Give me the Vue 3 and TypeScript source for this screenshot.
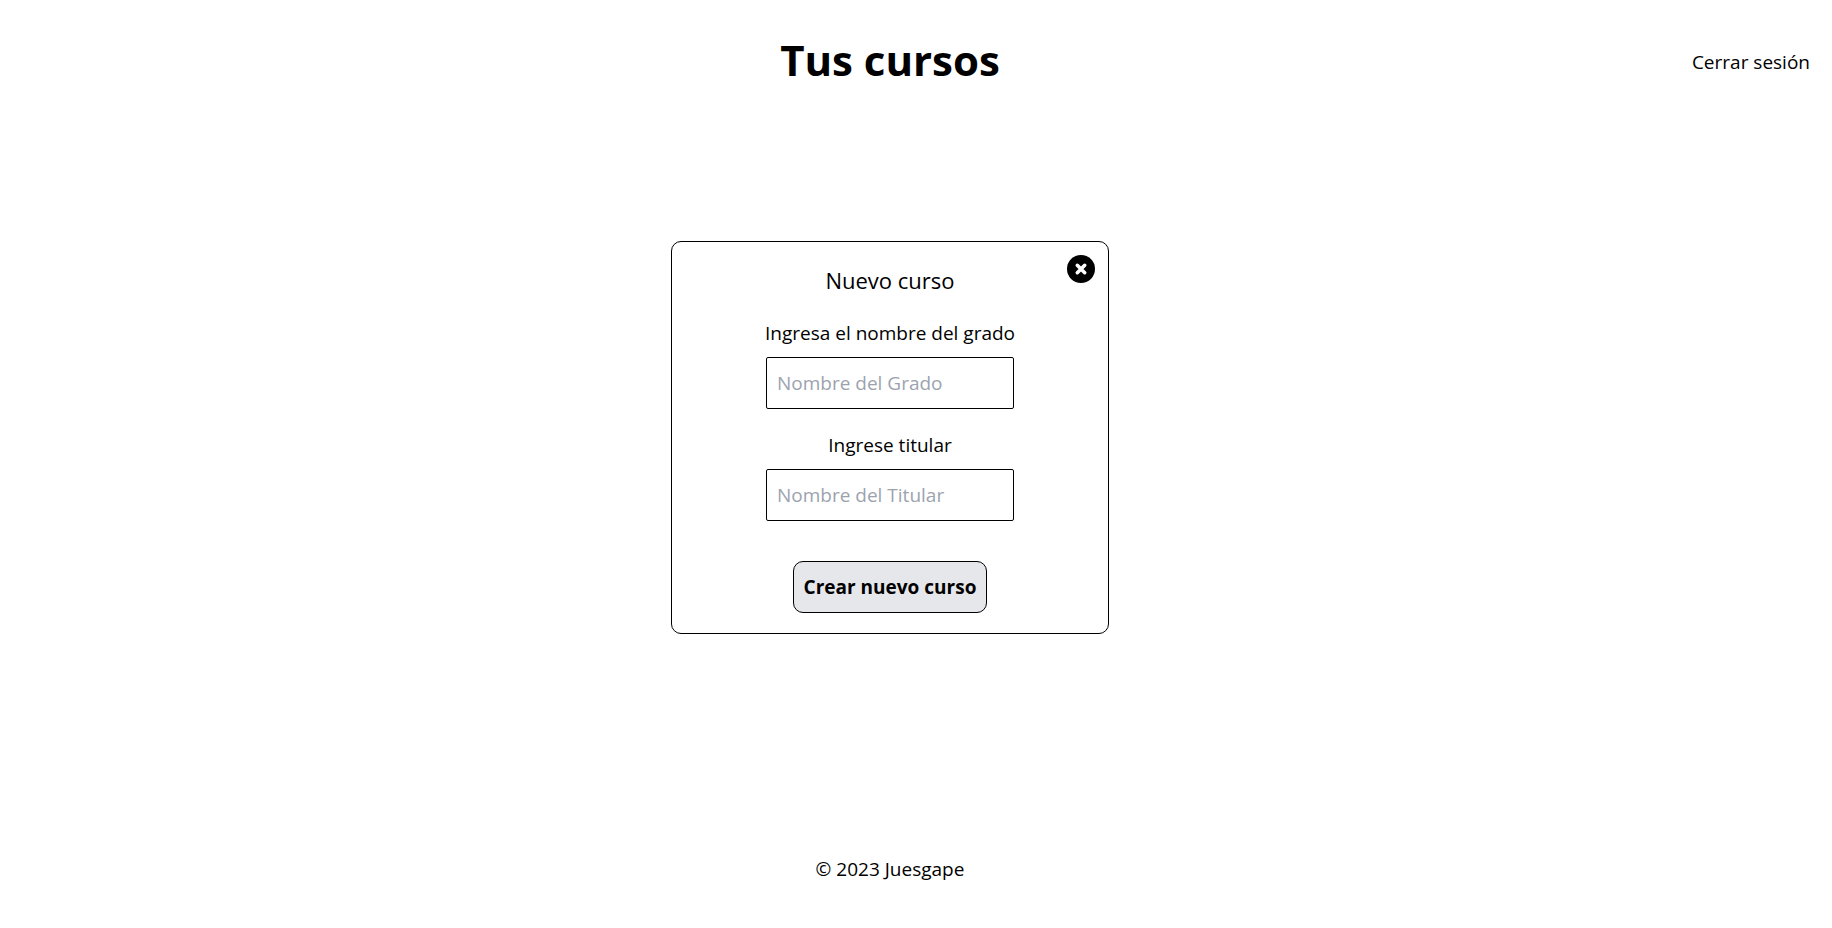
<script setup lang="ts">
import { ref } from 'vue'

const open = ref<boolean>(true)
const grade = ref<string>('')
const teacher = ref<string>('')
</script>

<template>
  <div class="page">
    <header class="header">
      <h1 class="title">Tus cursos</h1>
      <a class="logout" href="#">Cerrar sesión</a>
    </header>

    <main class="main">
      <form v-if="open" class="card" @submit.prevent>
        <button class="close" type="button" aria-label="Cerrar" @click="open = false">
          <svg viewBox="0 0 28 28" width="28" height="28" aria-hidden="true">
            <circle cx="14" cy="14" r="14" />
            <path d="M10.3 10.3 L17.7 17.7 M17.7 10.3 L10.3 17.7" />
          </svg>
        </button>
        <h2 class="heading">Nuevo curso</h2>
        <label class="label" for="grade">Ingresa el nombre del grado</label>
        <input id="grade" v-model="grade" class="field" type="text" placeholder="Nombre del Grado" />
        <label class="label" for="teacher">Ingrese titular</label>
        <input id="teacher" v-model="teacher" class="field" type="text" placeholder="Nombre del Titular" />
        <button class="submit" type="submit">Crear nuevo curso</button>
      </form>
    </main>

    <footer class="footer">© 2023 Juesgape</footer>
  </div>
</template>

<style>
body {
  margin: 0;
  background: #fff;
}
</style>

<style scoped>
.page {
  box-sizing: border-box;
  min-height: 100vh;
  padding-right: 22px;
  display: flex;
  flex-direction: column;
  font-family: "Segoe UI", "Open Sans", "Noto Sans", sans-serif;
  font-size: 19px;
  line-height: 30px;
  color: #000;
}

.header {
  display: grid;
  grid-template-columns: 1fr auto 1fr 30px;
  align-items: center;
  height: 120px;
}

.title {
  grid-column: 2;
  margin: 0;
  font-size: 42px;
  line-height: 50px;
  font-weight: 700;
}

.logout {
  grid-column: 3 / 5;
  justify-self: end;
  padding-top: 4px;
  color: inherit;
  text-decoration: none;
}

.main {
  flex: 1;
  display: flex;
  justify-content: center;
  align-items: flex-start;
  padding: 121px 30px 0 0;
}

.card {
  position: relative;
  box-sizing: border-box;
  width: 438px;
  padding: 20px;
  display: flex;
  flex-direction: column;
  align-items: center;
  border: 1px solid #000;
  border-radius: 10px;
}

.close {
  position: absolute;
  top: 13px;
  right: 13px;
  width: 28px;
  height: 28px;
  padding: 0;
  border: 0;
  background: none;
  cursor: pointer;
}

.close svg {
  display: block;
}

.close path {
  fill: none;
  stroke: #fff;
  stroke-width: 3.6;
  stroke-linecap: round;
}

.heading {
  margin: 0 0 20px;
  font-size: 22px;
  line-height: 36px;
  font-weight: 500;
}

.label {
  margin-bottom: 9px;
}

.field {
  box-sizing: border-box;
  width: 248px;
  height: 52px;
  padding: 10px;
  margin: 0 0 21px;
  border: 1px solid #000;
  border-radius: 2px;
  background: #fff;
  color: #000;
  font: inherit;
}

.field::placeholder {
  color: #9ca3af;
  opacity: 1;
}

.submit {
  box-sizing: border-box;
  height: 52px;
  margin-top: 19px;
  padding: 10px;
  border: 1px solid #000;
  border-radius: 10px;
  background: #e5e7eb;
  color: #000;
  font: inherit;
  font-weight: 700;
  cursor: pointer;
}

.footer {
  padding: 40px 30px 44px 0;
  text-align: center;
}
</style>
